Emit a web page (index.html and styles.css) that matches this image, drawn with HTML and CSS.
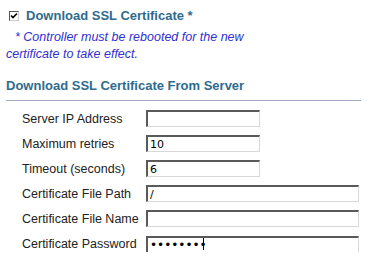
FILE: index.html
```html
<!doctype html>
<html lang="en">
    <head>
        <title>Download SSL Certificate</title>
        <meta http-equiv='Content-Type' content='text/html; charset=utf-8'>
        <link rel="stylesheet" href="styles.css">
    </head>
    <body>
        <div class="title-row">
            <span class="check-box">
                <svg width="8" height="8" viewBox="0 0 8 8"><path d="M1 3.5 L3 5.5 L7 1.5" fill="none" stroke="#000" stroke-width="1.6"/></svg>
            </span>
            <span class="title">Download SSL Certificate *</span>
        </div>
        <p class="note">* Controller must be rebooted for the new<br>certificate to take effect.</p>

        <h2 class="section-title">Download SSL Certificate From Server</h2>

        <div class="form-grid">
            <label for="serverIp">Server IP Address</label>
            <input id="serverIp" class="short" type="text" value="">
            <label for="retries">Maximum retries</label>
            <input id="retries" class="short" type="text" value="10">
            <label for="timeout">Timeout (seconds)</label>
            <input id="timeout" class="short" type="text" value="6">
            <label for="filePath">Certificate File Path</label>
            <input id="filePath" class="long" type="text" value="/">
            <label for="fileName">Certificate File Name</label>
            <input id="fileName" class="long" type="text" value="">
            <label for="certPass">Certificate Password</label>
            <span class="field-wrap">
                <input id="certPass" class="long" type="password" value="12345678">
                <span class="caret"></span>
            </span>
        </div>
    </body>
</html>
```
FILE: styles.css
```css
body {
    margin: 0;
    font-family: "Liberation Sans", Arial, sans-serif;
    background: #fff;
    color: #222;
}
.title-row {
    display: flex;
    align-items: center;
    padding: 8px 0 0 9px;
    height: 16px;
}
.check-box {
    display: inline-flex;
    align-items: center;
    justify-content: center;
    box-sizing: border-box;
    width: 10px;
    height: 10px;
    border-top: 1px solid #555;
    border-left: 1px solid #555;
    border-right: 1px solid #ccc;
    border-bottom: 1px solid #ccc;
    background: #fff;
    margin-right: 7px;
}
.title {
    font-size: 13px;
    font-weight: bold;
    line-height: 16px;
    color: #2f6b8d;
}
.note {
    margin: 5px 0 0 6px;
    font-size: 12.5px;
    line-height: 17px;
    font-style: italic;
    color: #3030d0;
    text-indent: 9px;
}
.section-title {
    margin: 15px 0 0 6px;
    width: 355px;
    padding-bottom: 6px;
    border-bottom: 1px solid #a3abc8;
    font-size: 13px;
    line-height: 16px;
    font-weight: bold;
    color: #2f6b8d;
}
.form-grid {
    display: grid;
    grid-template-columns: 124px auto;
    grid-auto-rows: 17px;
    row-gap: 8px;
    align-items: center;
    justify-items: start;
    margin-top: 9px;
    padding-left: 22px;
}
.form-grid label {
    font-size: 12.5px;
    color: #222;
}
input {
    box-sizing: border-box;
    height: 17px;
    margin: 0;
    padding: 0 2px;
    font-family: "DejaVu Sans", Verdana, sans-serif;
    font-size: 11px;
    color: #000;
    background: #fff;
    border-top: 2px solid #5a5a5a;
    border-left: 2px solid #5a5a5a;
    border-right: 1px solid #d8d8d8;
    border-bottom: 1px solid #d8d8d8;
    outline: none;
}
input[type="password"] {
    font-size: 12px;
}
.short {
    width: 114px;
}
.long {
    width: 213px;
}
.field-wrap {
    position: relative;
    display: block;
    height: 17px;
}
.caret {
    position: absolute;
    left: 57px;
    top: 3px;
    width: 1px;
    height: 12px;
    background: #000;
}
```
